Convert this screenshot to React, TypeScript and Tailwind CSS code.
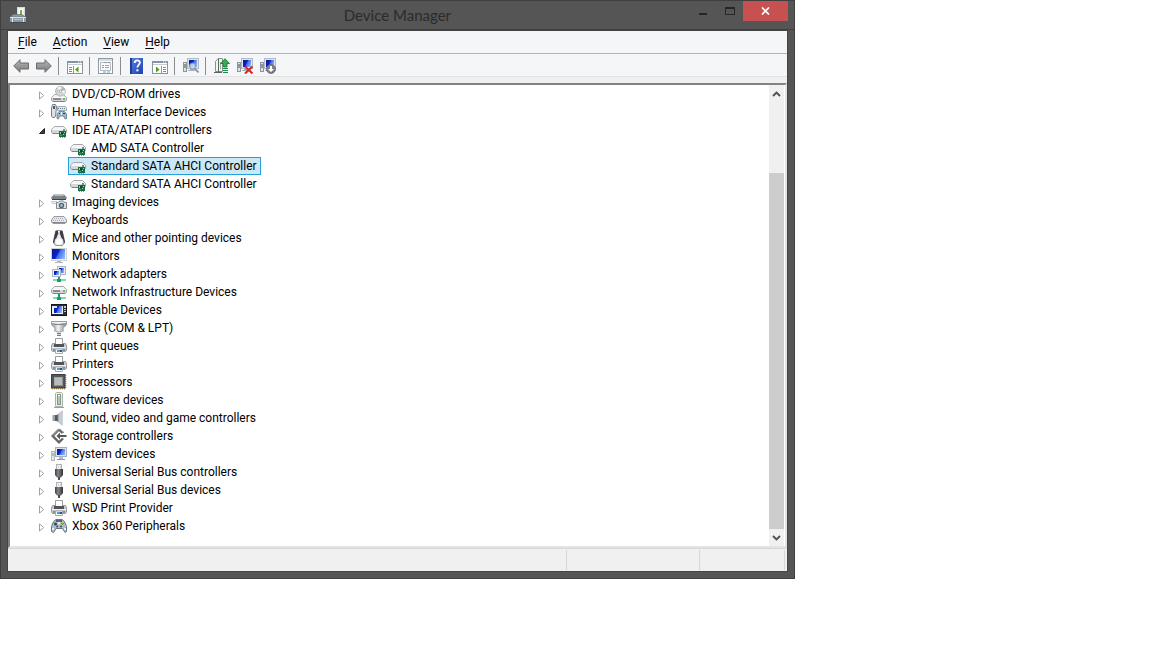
import React, { useState } from "react";

type IconProps = { children: React.ReactNode };

function Icon({ children }: IconProps) {
  return (
    <svg viewBox="0 0 16 16" className="size-4 shrink-0" aria-hidden="true">
      {children}
    </svg>
  );
}

function SharedGradients() {
  return (
    <svg className="absolute size-0" aria-hidden="true">
      <defs>
        <linearGradient id="screen" x1="0" y1="0.2" x2="1" y2="0.6">
          <stop offset="0" stopColor="#0a1a9c" />
          <stop offset="0.45" stopColor="#0b25c8" />
          <stop offset="0.55" stopColor="#3f6cec" />
          <stop offset="1" stopColor="#8fb2f8" />
        </linearGradient>
        <linearGradient id="metal" x1="0" y1="0" x2="0" y2="1">
          <stop offset="0" stopColor="#f4f4f6" />
          <stop offset="1" stopColor="#b0b2b6" />
        </linearGradient>
        <linearGradient id="metalSide" x1="0" y1="0" x2="1" y2="0">
          <stop offset="0" stopColor="#8e9296" />
          <stop offset="0.45" stopColor="#f2f3f4" />
          <stop offset="1" stopColor="#7d8186" />
        </linearGradient>
        <linearGradient id="darkMetal" x1="0" y1="0" x2="1" y2="0">
          <stop offset="0" stopColor="#3f4144" />
          <stop offset="0.4" stopColor="#85878b" />
          <stop offset="1" stopColor="#303235" />
        </linearGradient>
        <linearGradient id="arrowFill" x1="0" y1="0" x2="0" y2="1">
          <stop offset="0" stopColor="#b9b9b9" />
          <stop offset="1" stopColor="#777777" />
        </linearGradient>
        <linearGradient id="helpFill" x1="0" y1="0" x2="1" y2="1">
          <stop offset="0" stopColor="#5b84e0" />
          <stop offset="1" stopColor="#1d3fae" />
        </linearGradient>
      </defs>
    </svg>
  );
}

const Slab = ({ y = 4 }: { y?: number }) => (
  <g transform={`translate(0 ${y})`}>
    <path d="M3.500.500h9l3 3v3L14 7.500H2L.500 6.500v-3z" fill="#d6d7da" stroke="#a3a5a9" />
    <path d="M3.500 1h9L15 3.500H1z" fill="#f4f4f6" />
    <path d="M1 3.500h14" stroke="#fbfbfc" />
    <path d="M2 7.500h12" stroke="#808286" />
  </g>
);

const ControllerIcon = () => (
  <Icon>
    <Slab />
    <rect x="8" y="9" width="7" height="6" fill="#1d6b45" />
    <path d="M12 7h2v2h-2z" fill="#5aa37c" />
    <path d="M9 10h1v2H9zM13 10h1v1h-1zM12 12h1v1h-1z" fill="#8ed7a9" />
    <path d="M10 10h2v2h-2z" fill="#0f4a30" />
    <path d="M9 13h2v1H9z" fill="#3fa06f" />
    <path d="M9 15h1v1H9zM11 15h1v1h-1zM13 15h1v1h-1z" fill="#a8935a" />
  </Icon>
);

const DiscIcon = () => (
  <Icon>
    <Slab y={8} />
    <circle cx="9.500" cy="5.200" r="4.900" fill="#d5d7da" stroke="#a3a5aa" strokeWidth=".8" />
    <path d="M9.500 5.200 6.500 1.500l3-.9zM9.500 5.200l4.300 2V5z" fill="#fbfcfc" />
    <path d="M9.500 5.200 5.500 7 5 4z" fill="#c1d8c4" />
    <path d="M9.500 5.200 12 1.500l1.500 1.700z" fill="#a9abb0" />
    <circle cx="9.500" cy="5.200" r="1.300" fill="#fff" stroke="#888" strokeWidth=".7" />
    <path d="M2 13h8" stroke="#3c3f44" />
    <rect x="12" y="12" width="2" height="2" fill="#57c960" />
  </Icon>
);

const HidIcon = () => (
  <Icon>
    <path d="M1.500.500h3L5.500 3l-1 9-1 1.500h-2l-1-1.500V4z" fill="#dde2e7" stroke="#74818d" />
    <path d="M2 2h2v3H2z" fill="#4a5560" />
    <path d="M6.500 2.500h8l1 1v3h-9z" fill="#dbe4ec" stroke="#9fb0bd" />
    <path d="M7 4.500h8" stroke="#6d8292" strokeDasharray="1 1" />
    <path d="M6 14.500v-4.500L8 7.500h5.500l2 2.500v4.500l-1.500.5-1.500-3h-4l-1 3z" fill="#9db6ca" stroke="#5d7a91" strokeWidth=".8" />
    <path d="M8 9h1v1H8zM12 9h2v1h-2z" fill="#23374a" />
    <path d="M10 8h1v3h-1z" fill="#e7f0f7" />
  </Icon>
);

const ImagingIcon = () => (
  <Icon>
    <path d="M3 .500h10L16 3.500v1H0v-1z" fill="#7c8389" />
    <path d="M3.500 1.500h9" stroke="#b9bec3" />
    <path d="M1 4.500h14v1.500H1z" fill="#3c4247" />
    <path d="M0 7h6v3H1z" fill="#c7cacd" />
    <path d="M1 8h4v1H1z" fill="#eeeff0" />
    <path d="M5.500 8.500h2l1-1.500h4l1 1.500h2v6h-10z" fill="#dfe1e3" stroke="#83898e" />
    <circle cx="10.500" cy="11.500" r="2.700" fill="#596066" />
    <circle cx="10.500" cy="11.500" r="1.400" fill="#8fc0de" />
  </Icon>
);

const KeyboardIcon = () => (
  <Icon>
    <path d="M3 4.500h10L15.500 8v2l-1.500 1.500H2L.500 10V8z" fill="#e8e9ec" stroke="#97999e" />
    <path d="M3 6.500h10M2 8.500h12" stroke="#a5a7ac" strokeDasharray="1 1" />
    <path d="M1 10.500h14" stroke="#85878c" />
  </Icon>
);

const MouseIcon = () => (
  <Icon>
    <path d="M5 .500h6L12.500 6l1 6-2 3.500h-7L2.500 12l1-6z" fill="#e9eaeb" stroke="#8e9195" />
    <path d="M4.500 1H7v3L5.500 8 4 9.500 3 14l-1-2L3.500 6z" fill="#3a3d41" />
    <path d="M9 1h2.500l1 5 1.500 6-1 2-1-4.500L10.500 8 9 4z" fill="#3a3d41" />
    <rect x="7" y="1" width="2" height="5" fill="#f7f7f8" />
    <path d="M7.500 2h1v3h-1z" fill="#a3a6aa" />
    <path d="M5 10c2-2 4-2 6 0v3l-2 1.500H7L5 13z" fill="#fff" />
  </Icon>
);

const MonitorIcon = () => (
  <Icon>
    <rect x=".5" y=".5" width="15" height="12" fill="#eeeff1" stroke="#d0d2d5" />
    <rect x="1" y="1" width="13" height="10" fill="url(#screen)" />
    <path d="M6 13h4v1H6z" fill="#b8babd" />
    <path d="M4 14.500h8" stroke="#b4b6ba" />
  </Icon>
);

const NetworkIcon = () => (
  <Icon>
    <rect x="6.500" y=".5" width="8" height="8" fill="#e7ebf0" stroke="#a9b6c6" />
    <rect x="8" y="2" width="5" height="5" fill="url(#screen)" />
    <rect x="1.500" y="3.500" width="8" height="7" fill="#edf0f4" stroke="#a9b6c6" />
    <rect x="3" y="5" width="5" height="4" fill="url(#screen)" />
    <path d="M7 11h2v2h6v2H2v-2h5z" fill="#7ddcae" />
    <path d="M7 11h2v2h1v3H6v-3h1z" fill="#15a163" />
  </Icon>
);

const InfrastructureIcon = () => (
  <Icon>
    <Slab y={2} />
    <path d="M2 7h7" stroke="#3c3f44" />
    <rect x="12" y="6" width="2" height="2" fill="#57c960" />
    <path d="M7 10h2v3h6v2H2v-2h5z" fill="#7ddcae" />
    <path d="M7 10h2v3h1v3H6v-3h1z" fill="#15a163" />
  </Icon>
);

const PortableIcon = () => (
  <Icon>
    <rect x=".5" y="2.500" width="15" height="11" fill="#2d3035" stroke="#15171a" />
    <rect x="1" y="4" width="11" height="8" fill="#eceef2" />
    <rect x="3" y="4" width="8" height="7" fill="url(#screen)" />
    <path d="M3 4h3v2H3z" fill="#dbe6fb" />
    <path d="M13 4h2v2h-2zM13 7h2v1h-2zM13 9h2v1h-2z" fill="#c5c8cc" />
  </Icon>
);

const PortIcon = () => (
  <Icon>
    <path d="M.5 1.500h15v3l-1.500 2-2 1v3l-2 1.500H6L4 10.500v-3l-2-1-1.500-2z" fill="url(#metalSide)" stroke="#9a9da2" />
    <path d="M1 2.500h14" stroke="#eff0f2" />
    <path d="M3 4h10v1H3z" fill="#84888d" />
    <path d="M6 12h4v3H6z" fill="#d5d8db" />
    <path d="M6 13.500h4M6 15.500h4" stroke="#777b80" />
    <path d="M3 8h1v4H3zM12 8h1v4h-1z" fill="#bfc3c8" />
  </Icon>
);

const PrinterIcon = () => (
  <Icon>
    <path d="M4.500.500h7v6h-7z" fill="#fff" stroke="#9b9da0" />
    <path d="M1.500 5.500H4v1h8v-1h2.500l1 2v5l-1 1h-13l-1-1v-5z" fill="#c5c7ca" stroke="#8b8e92" strokeWidth=".8" />
    <path d="M3 6h10v3H3z" fill="#505357" />
    <path d="M1 9.500h14" stroke="#f0f1f2" />
    <path d="M2 11h12v2H2z" fill="#8d9094" />
    <path d="M4.500 11h7v4.500h-7z" fill="#f8f8f8" stroke="#a8abad" />
    <path d="M6 12h3v2H6z" fill="#3aa5cf" />
    <path d="M9 12h2v2H9z" fill="#1f5c76" />
  </Icon>
);

const ProcessorIcon = () => (
  <Icon>
    <path d="M14.500 1v14M1 14.500h14" stroke="#d0a232" strokeWidth="2" strokeDasharray="1 1" />
    <rect x=".5" y=".5" width="13.500" height="13.500" fill="#55585a" stroke="#3c3e40" />
    <rect x="3" y="3" width="9" height="9" fill="#a9abad" />
    <path d="M12 3v9H3z" fill="#8f9294" />
    <path d="M4 4h7v7H4z" fill="#b9babc" />
  </Icon>
);

const SoftwareIcon = () => (
  <Icon>
    <path d="M4.500 1.500l1-1h5l1 1v13h-7z" fill="#eceeed" stroke="#aab0ae" />
    <rect x="6.500" y="2.500" width="3" height="10" fill="#fff" stroke="#8f9493" />
    <path d="M7 4h2v8H7z" fill="#a0d892" />
    <path d="M3 15.500h10" stroke="#9a9e9f" />
  </Icon>
);

const SoundIcon = () => (
  <Icon>
    <path d="M1.500 5H6v6H1.500z" fill="#99a3ab" />
    <path d="M4 5h2v6H4z" fill="#4f5962" />
    <path d="M6 5l5.500-4.700v15.400L6 11z" fill="#a2aab1" />
    <path d="M8 3.300l3-2.500v14.400l-3-2.500z" fill="#c7ccd1" />
    <path d="M6 5l1-.8v7.600L6 11z" fill="#66707a" />
  </Icon>
);

const StorageIcon = () => (
  <Icon>
    <path d="M8 1.500 11.500 5M8 1.500 1.700 8 8 14.300l4-3.800" fill="none" stroke="#636568" strokeWidth="2.400" />
    <path d="M11.500 5 13 3.800M12 10.500 8.500 14" stroke="#636568" strokeWidth="1" />
    <path d="M9 4.500v7L5.500 8z" fill="#55575a" />
    <path d="M7 7h8.500v2H7z" fill="#55575a" />
    <path d="M1.900 7.600 8 1.300" stroke="#b5b7b8" strokeWidth=".8" />
  </Icon>
);

const SystemIcon = () => (
  <Icon>
    <rect x=".5" y="5.500" width="3" height="9" fill="#e4e7e9" stroke="#b3b8bd" />
    <path d="M1.500 7h1v3h-1z" fill="#57b85e" />
    <rect x="4.500" y="1.500" width="11" height="9" fill="#dfe4ec" stroke="#a6b2c1" />
    <rect x="6" y="3" width="8" height="6" fill="url(#screen)" />
    <path d="M8 11h4v2H8z" fill="#b9bec5" />
    <path d="M6 13.500h8" stroke="#8f969f" />
  </Icon>
);

const UsbIcon = () => (
  <Icon>
    <rect x="5.500" y=".5" width="5" height="5" fill="#f1f2f2" stroke="#b0b2b5" />
    <path d="M7 2h1v2H7zM9 2h1v2H9z" fill="#cfd1d3" />
    <path d="M4 5h8v6l-2 2.500H6L4 11z" fill="url(#darkMetal)" />
    <path d="M7 13h2v3H7z" fill="#4b4d50" />
  </Icon>
);

const GamepadIcon = () => (
  <Icon>
    <path d="M2.500 3.500 5 1.500h6l2.500 2 2 5v5l-1.500 1-2.500-4H5l-2.500 4-2-1v-5z" fill="#aebdc9" stroke="#647584" />
    <path d="M5 2h6v2H5z" fill="#4f6373" />
    <circle cx="4.500" cy="6" r="1.500" fill="#344552" />
    <circle cx="8" cy="5" r="1.200" fill="#eef4f7" />
    <path d="M11 4h1v1h-1z" fill="#e7b42d" />
    <path d="M10 5h1v1h-1z" fill="#237fd2" />
    <path d="M12 5h1v1h-1z" fill="#d84138" />
    <path d="M11 6h1v1h-1z" fill="#47a849" />
    <circle cx="6.200" cy="8.500" r="1" fill="#3a4b58" />
    <circle cx="10" cy="8.500" r="1" fill="#3a4b58" />
    <path d="M1 10h2v2H1zM13 10h2v2h-2z" fill="#e9eff3" />
  </Icon>
);

const AppIcon = () => (
  <Icon>
    <rect x="7.500" y=".5" width="7" height="9" fill="#eef0ee" stroke="#d9dcdc" />
    <path d="M9 2h4v6H9z" fill="#fff" />
    <path d="M10 3h2v5h-2z" fill="#7fae3f" />
    <path d="M3 7.500h9l3.500 2.500H.500z" fill="#8e99a2" stroke="#69737b" strokeWidth=".7" />
    <rect x="0" y="10" width="16" height="5" fill="#8d9aa4" />
    <path d="M0 10.500h16" stroke="#dbe1e5" />
    <path d="M2 11h1v4H2zM13 11h1v4h-1z" fill="#e5e9ec" />
    <path d="M4 12.500h8" stroke="#b6c0c8" />
    <path d="M0 15.500h16" stroke="#434a50" />
  </Icon>
);

const BackIcon = () => (
  <Icon>
    <path d="M.700 8 7 1.700V5h8.500v6H7v3.300z" fill="url(#arrowFill)" stroke="#6b6b6b" />
  </Icon>
);

const ForwardIcon = () => (
  <Icon>
    <path d="M15.300 8 9 1.700V5H.500v6H9v3.300z" fill="url(#arrowFill)" stroke="#6b6b6b" />
  </Icon>
);

const WindowFrame = () => (
  <>
    <rect x=".5" y="3.500" width="15" height="12" fill="#fff" stroke="#8b949c" />
    <path d="M0 3h16v2H0z" fill="#8393a6" />
    <path d="M11 3.500h1v1h-1zM13 3.500h1v1h-1z" fill="#fff" />
    <path d="M1 6h14v1H1z" fill="#c3cbd3" />
  </>
);

const ConsoleTreeIcon = () => (
  <Icon>
    <WindowFrame />
    <path d="M6.500 8v7" stroke="#8d969f" />
    <path d="M2 9.500h3M2 11.500h3M2 13.500h3" stroke="#4d93d4" />
    <path d="M11.500 8.500v6L8 11.500z" fill="#4c9b19" />
  </Icon>
);

const ActionPaneIcon = () => (
  <Icon>
    <WindowFrame />
    <path d="M9.500 8v7" stroke="#8d969f" />
    <path d="M11 9.500h3M11 11.500h3M11 13.500h3" stroke="#63a84a" />
    <path d="M4 8.500v6l3.500-3z" fill="#4c9b19" />
  </Icon>
);

const PropertiesIcon = () => (
  <Icon>
    <rect x=".5" y=".5" width="14" height="15" fill="#fff" stroke="#9298a0" />
    <path d="M1 1h13v2H1z" fill="#d8dce0" />
    <rect x="2.500" y="4.500" width="10" height="8" fill="#fafafa" stroke="#b6bdc4" />
    <path d="M6 4h3v1H6zM10 4h2v1h-2z" fill="#8f989f" />
    <path d="M4 7.500h2M4 9.500h2" stroke="#43b9de" />
    <path d="M7 7.500h4M7 9.500h4" stroke="#a2aab0" />
    <path d="M5 14h3M9 14h3" stroke="#44b7d7" />
  </Icon>
);

const HelpIcon = () => (
  <Icon>
    <rect x="1" y="0" width="13" height="16" fill="url(#helpFill)" />
    <path d="M1 0h2v16H1z" fill="#1d3b99" />
    <path d="M5.700 5c0-3.500 5.200-3.300 5.200-.4 0 2-2.500 2.400-2.500 5" fill="none" stroke="#fff" strokeWidth="1.800" />
    <rect x="7.400" y="11.300" width="2" height="2" fill="#fff" />
  </Icon>
);

const Workstation = () => (
  <>
    <rect x=".5" y="4.500" width="3" height="9" fill="#dfe2e4" stroke="#8d969e" />
    <path d="M1.500 6h1v4h-1z" fill="#444b50" />
    <rect x="4.500" y=".5" width="11" height="10" fill="#e2e5e9" stroke="#b3bac2" />
    <rect x="6" y="2" width="8" height="7" fill="url(#screen)" />
    <path d="M7 11h4v1H7zM5 12h7v1H5z" fill="#a9b0b7" />
  </>
);

const ScanIcon = () => (
  <Icon>
    <Workstation />
    <circle cx="9.500" cy="8" r="3" fill="#cfe4f6" fillOpacity=".85" stroke="#8492a0" />
    <path d="m11.500 10.500 4 4" stroke="#7d8a97" strokeWidth="1.600" />
  </Icon>
);

const UpdateIcon = () => (
  <Icon>
    <path d="M1.500 3.500 4 .500h4.500v13h-7z" fill="#f1f3f1" stroke="#8a908f" />
    <path d="M4.500 1v13" stroke="#5e6463" />
    <path d="M6 4h1v7H6z" fill="#7fc47a" />
    <path d="M0 14.500h8" stroke="#5e6463" />
    <path d="M11 .700 15.500 5.500H13V9H9.500V5.500H6.700z" fill="#3aa85b" stroke="#147234" strokeWidth=".8" />
    <path d="M9 10.500h5M9 12.500h5M9 14.500h5" stroke="#1c8a48" />
  </Icon>
);

const UninstallIcon = () => (
  <Icon>
    <Workstation />
    <path d="m8 8.500 7.500 7M15.500 8.500 8 15.500" stroke="#e22222" strokeWidth="2" />
  </Icon>
);

const DisableIcon = () => (
  <Icon>
    <Workstation />
    <circle cx="11" cy="11" r="4.500" fill="#808386" stroke="#606366" strokeWidth=".8" />
    <path d="M10 8h2v3h2l-3 3-3-3h2z" fill="#fff" />
  </Icon>
);

type Device = { label: string; icon: React.ComponentType; children?: string[] };

const devices: Device[] = [
  { label: "DVD/CD-ROM drives", icon: DiscIcon },
  { label: "Human Interface Devices", icon: HidIcon },
  {
    label: "IDE ATA/ATAPI controllers",
    icon: ControllerIcon,
    children: ["AMD SATA Controller", "Standard SATA AHCI Controller", "Standard SATA AHCI Controller"],
  },
  { label: "Imaging devices", icon: ImagingIcon },
  { label: "Keyboards", icon: KeyboardIcon },
  { label: "Mice and other pointing devices", icon: MouseIcon },
  { label: "Monitors", icon: MonitorIcon },
  { label: "Network adapters", icon: NetworkIcon },
  { label: "Network Infrastructure Devices", icon: InfrastructureIcon },
  { label: "Portable Devices", icon: PortableIcon },
  { label: "Ports (COM & LPT)", icon: PortIcon },
  { label: "Print queues", icon: PrinterIcon },
  { label: "Printers", icon: PrinterIcon },
  { label: "Processors", icon: ProcessorIcon },
  { label: "Software devices", icon: SoftwareIcon },
  { label: "Sound, video and game controllers", icon: SoundIcon },
  { label: "Storage controllers", icon: StorageIcon },
  { label: "System devices", icon: SystemIcon },
  { label: "Universal Serial Bus controllers", icon: UsbIcon },
  { label: "Universal Serial Bus devices", icon: UsbIcon },
  { label: "WSD Print Provider", icon: PrinterIcon },
  { label: "Xbox 360 Peripherals", icon: GamepadIcon },
];

type Tool = { label: string; icon: React.ComponentType };

const toolGroups: Tool[][] = [
  [
    { label: "Back", icon: BackIcon },
    { label: "Forward", icon: ForwardIcon },
  ],
  [{ label: "Show/Hide Console Tree", icon: ConsoleTreeIcon }],
  [{ label: "Properties", icon: PropertiesIcon }],
  [
    { label: "Help", icon: HelpIcon },
    { label: "Show/Hide Action Pane", icon: ActionPaneIcon },
  ],
  [{ label: "Scan for hardware changes", icon: ScanIcon }],
  [
    { label: "Update Driver Software", icon: UpdateIcon },
    { label: "Uninstall", icon: UninstallIcon },
    { label: "Disable", icon: DisableIcon },
  ],
];

function TitleBar() {
  return (
    <header className="grid h-[29px] grid-cols-[1fr_auto_1fr] border-b border-[#404040]">
      <div className="flex items-center pl-[9px]">
        <AppIcon />
      </div>
      <h1 className="self-center font-['Lato','Open_Sans',sans-serif] text-[15px] leading-5 text-[#2b2b2b]">
        Device Manager
      </h1>
      <div className="flex h-5 items-stretch justify-end pr-[6px]">
        <button type="button" aria-label="Minimize" className="flex w-7 items-center justify-center">
          <svg viewBox="0 0 10 10" className="size-[10px]" aria-hidden="true">
            <path d="M1 7h8v2H1z" fill="#262626" />
          </svg>
        </button>
        <button type="button" aria-label="Maximize" className="flex w-[26px] items-center justify-center">
          <svg viewBox="0 0 10 8" className="h-2 w-[10px]" aria-hidden="true">
            <path d="M0 0h10v8H0zM1 2v5h8V2z" fill="#262626" fillRule="evenodd" />
          </svg>
        </button>
        <button type="button" aria-label="Close" className="flex w-[45px] items-center justify-center bg-[#c75050]">
          <svg viewBox="0 0 9 8" className="h-2 w-[9px]" aria-hidden="true">
            <path d="m1 .500 7 7M8 .500l-7 7" stroke="#fff" strokeWidth="1.700" />
          </svg>
        </button>
      </div>
    </header>
  );
}

function MenuBar() {
  return (
    <nav className="flex h-[23px] items-center border-b border-[#b0b3b7] pl-[2px]">
      {["File", "Action", "View", "Help"].map((name) => (
        <button key={name} type="button" className="px-2 leading-[18px]">
          <span className="underline underline-offset-2">{name[0]}</span>
          {name.slice(1)}
        </button>
      ))}
    </nav>
  );
}

function ToolBar() {
  return (
    <div role="toolbar" aria-label="Tools" className="flex h-[23px] items-center border-b border-[#e2e3e4] pt-[2px] pl-[2px]">
      {toolGroups.map((group, index) => (
        <React.Fragment key={group[0].label}>
          {index > 0 && <span className="mr-[5px] ml-[2px] h-[18px] w-px bg-[#8b8c8e]" />}
          {group.map(({ label, icon: Glyph }) => (
            <button key={label} type="button" aria-label={label} className="pr-1 pl-[3px]">
              <Glyph />
            </button>
          ))}
        </React.Fragment>
      ))}
    </div>
  );
}

function DeviceTree() {
  const [selected, setSelected] = useState("Standard SATA AHCI Controller-1");
  const [open, setOpen] = useState<string[]>(["IDE ATA/ATAPI controllers"]);

  const toggle = (label: string) =>
    setOpen((list) => (list.includes(label) ? list.filter((item) => item !== label) : [...list, label]));

  return (
    <ul role="tree" aria-label="Devices" className="min-w-0 grow pb-[11px] pl-[26px]">
      {devices.map(({ label, icon: Glyph, children }) => {
        const expanded = Boolean(children) && open.includes(label);
        return (
          <li key={label} role="treeitem" aria-expanded={expanded}>
            <div className="flex h-[18px] items-center">
              <button
                type="button"
                aria-label={`Toggle ${label}`}
                onClick={() => toggle(label)}
                className="flex h-[18px] w-[15px] items-end justify-start pb-[3px] pl-[2px]"
              >
                <svg viewBox="0 0 8 9" className="h-[9px] w-2" aria-hidden="true">
                  {expanded ? (
                    <path d="M6.500 1.500v5h-5z" fill="#404040" stroke="#262626" />
                  ) : (
                    <path d="M1.500.900v7.200L5.700 4.500z" fill="#fff" stroke="#a2a2a2" />
                  )}
                </svg>
              </button>
              <button type="button" onClick={() => setSelected(label)} className="flex items-center gap-[5px]">
                <Glyph />
                <span className="whitespace-nowrap">{label}</span>
              </button>
            </div>
            {expanded && (
              <ul role="group" className="pl-8">
                {children!.map((child, index) => {
                  const key = `${child}-${index}`;
                  const active = key === selected;
                  return (
                    <li key={key} role="treeitem" aria-selected={active}>
                      <button
                        type="button"
                        onClick={() => setSelected(key)}
                        className={
                          active
                            ? "flex h-[18px] items-center gap-[5px] border border-[#26a0da] bg-[#cbe8f6] pr-[3px] pl-px"
                            : "flex h-[18px] items-center gap-[5px] border border-transparent pr-[3px] pl-px"
                        }
                      >
                        <ControllerIcon />
                        <span className="whitespace-nowrap">{child}</span>
                      </button>
                    </li>
                  );
                })}
              </ul>
            )}
          </li>
        );
      })}
    </ul>
  );
}

function ScrollBar() {
  return (
    <div className="mr-px flex w-[15px] shrink-0 flex-col bg-[#f0f0f0]">
      <button type="button" aria-label="Scroll up" className="flex h-[17px] items-center justify-center">
        <svg viewBox="0 0 9 6" className="h-[6px] w-[9px]" aria-hidden="true">
          <path d="M1 5l3.500-3.500L8 5" fill="none" stroke="#505050" strokeWidth="1.900" />
        </svg>
      </button>
      <div className="flex-[71]" />
      <div className="flex-[356] bg-[#cdcdcd]" />
      <button type="button" aria-label="Scroll down" className="flex h-[17px] items-center justify-center">
        <svg viewBox="0 0 9 6" className="h-[6px] w-[9px]" aria-hidden="true">
          <path d="M1 1l3.500 3.500L8 1" fill="none" stroke="#505050" strokeWidth="1.900" />
        </svg>
      </button>
    </div>
  );
}

export default function App() {
  return (
    <main className="min-h-screen bg-white font-['Roboto','Noto_Sans',sans-serif] text-[12px] leading-[16px] text-black">
      <SharedGradients />
      <section aria-label="Device Manager" className="w-[69%] border border-[#3f3f3f] bg-[#555555]">
        <TitleBar />
        <div className="mx-[6px] mb-[6px] border-x border-b border-[#454545] bg-[#f0f0f0]">
          <div className="border-t border-[#454545] bg-[#f4f6f8]">
            <MenuBar />
            <ToolBar />
          </div>
          <div className="mt-[6px] flex border-2 border-t-[#828282] border-r-[#e3e3e3] border-b-[#e3e3e3] border-l-[#828282] bg-white">
            <DeviceTree />
            <ScrollBar />
          </div>
          <footer className="flex h-[23px] border-t border-[#d7d7d7] pt-px pb-px">
            <div className="grow border-r border-[#d7d7d7]" />
            <div className="w-[133px] border-r border-[#d7d7d7]" />
            <div className="mr-[2px] w-[85px] border-r border-[#d7d7d7]" />
          </footer>
        </div>
      </section>
    </main>
  );
}
